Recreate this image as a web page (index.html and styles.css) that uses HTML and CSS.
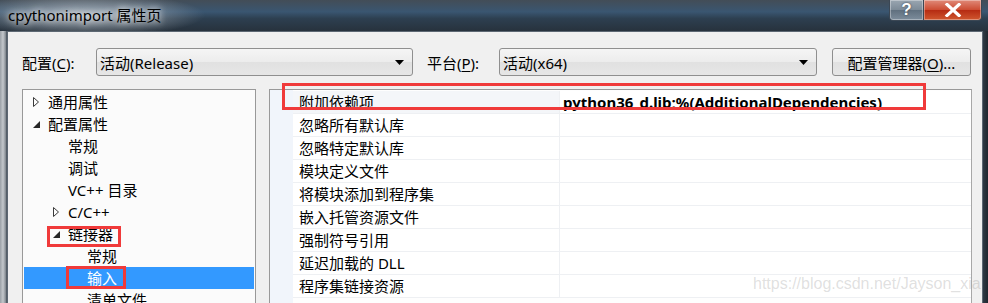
FILE: index.html
```html
<!DOCTYPE html>
<html lang="zh-CN">
<head>
  <meta charset="UTF-8">
  <title>cpythonimport 属性页</title>
  <link rel="stylesheet" href="styles.css">
</head>
<body>
  <div class="window">
    <div class="titlebar">
      <span class="title">cpythonimport 属性页</span>
      <div class="caption-buttons">
        <span class="cap-btn help">?</span>
        <span class="cap-btn close">
          <svg width="18" height="14" viewBox="0 0 18 14"><path d="M3 1.5 L15 12.5 M15 1.5 L3 12.5" stroke="#fff" stroke-width="3.2" stroke-linecap="square"/></svg>
        </span>
      </div>
    </div>

    <div class="client">
      <div class="toolbar">
        <label class="field-label">配置(<u>C</u>):</label>
        <div class="combo combo-config">
          <span>活动(Release)</span>
          <svg class="combo-arrow" width="9" height="5" viewBox="0 0 9 5"><path d="M0 0 H9 L4.5 5 Z" fill="#000"/></svg>
        </div>
        <label class="field-label platform-label">平台(<u>P</u>):</label>
        <div class="combo combo-platform">
          <span>活动(x64)</span>
          <svg class="combo-arrow" width="9" height="5" viewBox="0 0 9 5"><path d="M0 0 H9 L4.5 5 Z" fill="#000"/></svg>
        </div>
        <button class="btn">配置管理器(<u>O</u>)...</button>
      </div>

      <div class="panes">
        <ul class="tree">
          <li class="lvl0"><svg class="tw" width="16" height="22" viewBox="0 0 16 22"><path d="M1.5 6.5 L6.5 11 L1.5 15.5 Z" fill="none" stroke="#3a3a3a" stroke-width="1"/></svg>通用属性</li>
          <li class="lvl0"><svg class="tw" width="16" height="22" viewBox="0 0 16 22"><path d="M1 15 L8 15 L8 8 Z" fill="#262626"/></svg>配置属性</li>
          <li class="lvl1 leaf">常规</li>
          <li class="lvl1 leaf">调试</li>
          <li class="lvl1 leaf">VC++ 目录</li>
          <li class="lvl1"><svg class="tw" width="16" height="22" viewBox="0 0 16 22"><path d="M1.5 6.5 L6.5 11 L1.5 15.5 Z" fill="none" stroke="#3a3a3a" stroke-width="1"/></svg>C/C++</li>
          <li class="lvl1"><svg class="tw" width="16" height="22" viewBox="0 0 16 22"><path d="M1 15 L8 15 L8 8 Z" fill="#262626"/></svg>链接器</li>
          <li class="lvl2">常规</li>
          <li class="lvl2 selected">输入</li>
          <li class="lvl2">清单文件</li>
        </ul>

        <div class="grid">
          <div class="row current"><div class="name">附加依赖项</div><div class="value">python36_d.lib;%(AdditionalDependencies)</div></div>
          <div class="row"><div class="name">忽略所有默认库</div><div class="value"></div></div>
          <div class="row"><div class="name">忽略特定默认库</div><div class="value"></div></div>
          <div class="row"><div class="name">模块定义文件</div><div class="value"></div></div>
          <div class="row"><div class="name">将模块添加到程序集</div><div class="value"></div></div>
          <div class="row"><div class="name">嵌入托管资源文件</div><div class="value"></div></div>
          <div class="row"><div class="name">强制符号引用</div><div class="value"></div></div>
          <div class="row"><div class="name">延迟加载的 DLL</div><div class="value"></div></div>
          <div class="row"><div class="name">程序集链接资源</div><div class="value"></div></div>
        </div>
      </div>
    </div>

    <!-- red marks drawn over the screenshot -->
    <div class="mark mark-row"></div>
    <div class="mark mark-linker"></div>
    <div class="mark mark-input"></div>

    <div class="watermark">https://blog.csdn.net/Jayson_xia</div>
  </div>
</body>
</html>
```

FILE: styles.css
```css
body {
  margin: 0;
  background: #2b333c;
}
.window {
  position: relative;
  width: 988px;
  height: 303px;
  overflow: hidden;
  font-family: "Noto Sans", "Noto Sans CJK SC", sans-serif;
  font-size: 15px;
  color: #000;
  background: linear-gradient(to right, #9aa0a6 0, #c4c8cc 3px, #7d848b 6px, #2f3a45 7px, #2f3a45 983px, #1f262e 988px);
}
.titlebar {
  display: flex;
  align-items: flex-start;
  height: 31px;
  background:
    radial-gradient(ellipse 120px 22px at 85px 15px, rgba(190,196,202,0.85), rgba(190,196,202,0) 100%),
    linear-gradient(to bottom, #434d57 0, #3a5671 38%, #2d3f50 60%, #27323d 100%);
}
.title {
  padding-left: 8px;
  line-height: 30px;
  font-size: 15px;
  color: #000;
  text-shadow: 0 0 6px rgba(255,255,255,0.9), 0 0 10px rgba(255,255,255,0.6);
}
.caption-buttons {
  display: flex;
  margin-left: auto;
  margin-right: 6px;
}
.cap-btn {
  display: flex;
  align-items: center;
  justify-content: center;
  height: 20px;
  border: 1px solid #3b4754;
  border-top: none;
  box-shadow: inset 0 0 0 1px rgba(255,255,255,0.35);
}
.help {
  width: 33px;
  border-radius: 0 0 0 4px;
  background: linear-gradient(to bottom, #9aa6b1 0, #7c8a97 50%, #5f6f7e 50%, #7d8d9c 100%);
  color: #fff;
  font-family: "Liberation Sans", sans-serif;
  font-weight: bold;
  font-size: 17px;
  text-shadow: 0 0 2px #2a3440;
}
.close {
  width: 57px;
  border-left: none;
  border-radius: 0 0 4px 0;
  background: linear-gradient(to bottom, #e08a79 0, #cc4b31 50%, #b52a12 50%, #d0572f 100%);
}
.client {
  height: 400px;
  margin: 0 5px 0 7px;
  padding: 0 10px 0 14px;
  background: #f0f0f0;
  border: 1px solid #5d6873;
  border-bottom: none;
}
.toolbar {
  display: flex;
  align-items: center;
  padding-top: 16px;
}
.field-label {
  width: 74px;
}
.platform-label {
  width: 72px;
  margin-left: 14px;
}
u {
  text-decoration-thickness: 1px;
  text-underline-offset: 2px;
}
.combo {
  display: flex;
  align-items: center;
  box-sizing: border-box;
  height: 28px;
  padding: 0 8px 0 3px;
  border: 1px solid #8f8f8f;
  border-radius: 3px;
  background: linear-gradient(to bottom, #f5f5f5 0, #ececec 50%, #e1e1e1 51%, #e6e6e6 100%);
}
.combo-config {
  width: 317px;
}
.combo-platform {
  width: 318px;
}
.combo-arrow {
  margin-left: auto;
  margin-top: 1px;
}
.btn {
  box-sizing: border-box;
  width: 139px;
  height: 28px;
  margin-left: 15px;
  padding: 0;
  font: inherit;
  color: #000;
  border: 1px solid #8f8f8f;
  border-radius: 3px;
  background: linear-gradient(to bottom, #f5f5f5 0, #ececec 50%, #e1e1e1 51%, #e6e6e6 100%);
}
.panes {
  display: flex;
  margin-top: 13px;
}
.tree {
  box-sizing: border-box;
  width: 234px;
  height: 240px;
  margin: 0;
  padding: 1px 0 0;
  list-style: none;
  background: #fbfbfb;
  border: 1px solid #999;
}
.tree li {
  display: flex;
  align-items: center;
  height: 22px;
  margin: 0 1px;
  line-height: 22px;
  white-space: nowrap;
}
.tree .lvl0 {
  padding-left: 8px;
}
.tree .lvl1 {
  padding-left: 28px;
}
.tree .lvl1.leaf {
  padding-left: 44px;
}
.tree .lvl2 {
  padding-left: 63px;
}
.tree .tw {
  flex: none;
}
.tree .selected {
  background: #3399ff;
  color: #fff;
}
.grid {
  flex: 1;
  box-sizing: border-box;
  height: 240px;
  margin-left: 13px;
  padding: 1px 0 0 23px;
  border: 1px solid #999;
  border-right-color: #a8a8a8;
  background: linear-gradient(to right, #f1f5fb 23px, #fefefe 23px);
}
.row {
  display: flex;
  height: 22px;
  line-height: 22px;
  background: #fff;
  border-bottom: 1px solid #eef0f3;
}
.row .name {
  box-sizing: border-box;
  width: 267px;
  padding-left: 6px;
  border-right: 1px solid #eef0f3;
  white-space: nowrap;
}
.row.current .name {
  background: #f4f6f9;
}
.row .value {
  flex: 1;
  padding-left: 3px;
  font-weight: bold;
  white-space: nowrap;
  overflow: hidden;
}
.mark {
  position: absolute;
  box-sizing: border-box;
  border: 3px solid #f03a3a;
}
.mark-row {
  left: 282px;
  top: 83px;
  width: 644px;
  height: 27px;
}
.mark-linker {
  left: 47px;
  top: 226px;
  width: 74px;
  height: 21px;
}
.mark-input {
  left: 66px;
  top: 266px;
  width: 60px;
  height: 23px;
}
.watermark {
  position: absolute;
  left: 753px;
  top: 275px;
  font-family: "Liberation Sans", sans-serif;
  font-size: 16px;
  color: rgba(150,150,150,0.3);
}
```
